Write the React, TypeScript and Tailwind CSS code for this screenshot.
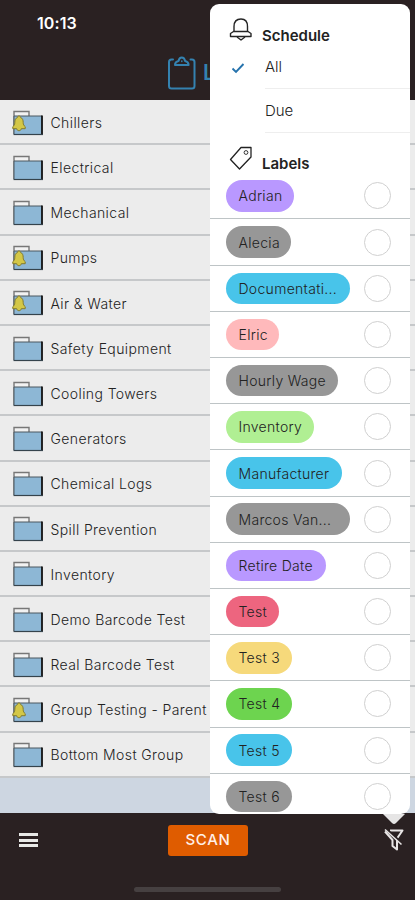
import clsx from "clsx";

const groups = [
  { name: "Chillers", alert: true },
  { name: "Electrical" },
  { name: "Mechanical" },
  { name: "Pumps", alert: true },
  { name: "Air & Water", alert: true },
  { name: "Safety Equipment" },
  { name: "Cooling Towers" },
  { name: "Generators" },
  { name: "Chemical Logs" },
  { name: "Spill Prevention" },
  { name: "Inventory" },
  { name: "Demo Barcode Test" },
  { name: "Real Barcode Test" },
  { name: "Group Testing - Parent", alert: true },
  { name: "Bottom Most Group" },
];

const labels = [
  { name: "Adrian", style: "w-[68px] bg-[#b998ff]" },
  { name: "Alecia", style: "w-[65px] bg-[#979797]" },
  { name: "Documentati...", style: "w-[124px] bg-[#48c4ea]" },
  { name: "Elric", style: "w-[53px] bg-[#ffb9bb]" },
  { name: "Hourly Wage", style: "w-[112px] bg-[#979797]" },
  { name: "Inventory", style: "w-[88px] bg-[#b0ef93]" },
  { name: "Manufacturer", style: "w-[116px] bg-[#48c4ea]" },
  { name: "Marcos Van...", style: "w-[124px] bg-[#979797]" },
  { name: "Retire Date", style: "w-[100px] bg-[#b998ff]" },
  { name: "Test", style: "w-[53px] bg-[#ed657f]" },
  { name: "Test 3", style: "w-[66px] bg-[#f6d97b]" },
  { name: "Test 4", style: "w-[66px] bg-[#6dd44f]" },
  { name: "Test 5", style: "w-[66px] bg-[#48c4ea]" },
  { name: "Test 6", style: "w-[66px] bg-[#979797]" },
];

function FolderIcon({ alert }: { alert?: boolean }) {
  return (
    <svg width="32" height="28" viewBox="0 0 32 28" fill="none" className="mt-0.5 shrink-0">
      <path d="M2 25V2.500H17V7" fill="#f2f2f2" stroke="#777" strokeWidth="1.400" />
      <rect x="2" y="7" width="28" height="18.500" fill="#8db7d5" />
      <path d="M2 25V7H30" stroke="#4d5960" />
      <path d="M30 6.500V26" stroke="#111" strokeWidth="1.800" />
      <path d="M1.500 25.500H31" stroke="#35434c" strokeWidth="1.200" />
      {alert && (
        <path
          d="M7 7c1 0 1.400.6 1.500 1.400C10.500 9.200 11.200 11 11.200 13.500c0 2 .6 3 2 4.200v2H9.300C9 21 8.300 21.700 7 21.700S5 21 4.700 19.700H.8v-2c1.400-1.200 2-2.200 2-4.200C2.800 11 3.500 9.200 5.500 8.400 5.600 7.600 6 7 7 7Z"
          fill="#d3c747"
          stroke="#837b2b"
          strokeWidth="1"
        />
      )}
    </svg>
  );
}

function ClipboardIcon() {
  return (
    <svg width="30" height="36" viewBox="0 0 30 36" fill="none" stroke="#3482b0" strokeWidth="2" strokeLinecap="round" strokeLinejoin="round">
      <path d="M6 5.500H4.500Q2 5.500 2 8V32Q2 34.500 4.500 34.500H25Q27.500 34.500 27.500 32V8Q27.500 5.500 25 5.500H23.500" />
      <path d="M8 11C8 8.500 9 7.500 11.500 7C12 4.500 13 3.500 14.800 3.500S17.600 4.500 18.100 7C20.600 7.500 21.600 8.500 21.600 11Z" />
      <path d="M14.800 7v.5" strokeWidth="1.500" />
    </svg>
  );
}

function BellIcon() {
  return (
    <svg width="24" height="26" viewBox="0 0 24 26" fill="none" stroke="#252525" strokeWidth="1.400" strokeLinejoin="round">
      <path d="M5 14.500V9.500C5 5 7.500 2 12 2S18.500 5 18.500 9.500V14.500" />
      <path d="M4.500 14.500H19L22 16.500V19.500H1.500V16.500Z" />
      <path d="M8 20 12 23 16 20" />
    </svg>
  );
}

function TagIcon() {
  return (
    <svg width="24" height="26" viewBox="0 0 24 26" fill="none" stroke="#222" strokeWidth="1.300" strokeLinejoin="round">
      <path d="M12 2.500H22V12L10.500 24 1.500 14.500Z" />
      <circle cx="17" cy="7.500" r="1.900" strokeWidth="0.900" />
    </svg>
  );
}

function FilterOffIcon() {
  return (
    <svg width="24" height="24" viewBox="0 0 24 24" fill="none" stroke="#e8e5e5" strokeWidth="2" strokeLinejoin="round">
      <path d="M8 2.500H20.500L15 10.500V21.500L10.500 18V12L3 3.500" />
      <path d="M4.500 1 20.500 15.500" stroke="#2a2122" strokeWidth="2" />
      <path d="M3 1.500 19.500 16.500" strokeWidth="1.600" />
    </svg>
  );
}

function FilterPanel() {
  return (
    <div className="absolute left-[210px] top-1 z-10 h-[810px] w-[200px] overflow-hidden rounded-[9px] bg-white">
      <div className="flex h-[41px] pl-[19px] pt-[13px]">
        <BellIcon />
        <h2 className="ml-[9px] mt-[9px] text-[15px] font-semibold leading-5 text-[#222]">Schedule</h2>
      </div>
      <div className="flex h-[44px]">
        <div className="w-[55px] pl-[21px] pt-[16px]">
          <svg width="14" height="14" viewBox="0 0 14 14" fill="none" stroke="#2673ad" strokeWidth="1.900">
            <path d="m1.500 7.500 3.500 3.500L12.500 3" />
          </svg>
        </div>
        <div className="flex-1 border-b border-[#eee] pt-[12px] text-[15px] font-light leading-5">All</div>
      </div>
      <div className="ml-[55px] h-[44px] border-b border-[#eee] pt-[12px] text-[15px] font-light leading-5">Due</div>
      <div className="flex h-[40.300px] pl-[19px] pt-[12px]">
        <TagIcon />
        <h2 className="ml-[9px] mt-[9px] text-[15px] font-semibold leading-5 text-[#222]">Labels</h2>
      </div>
      {labels.map((label) => (
        <div key={label.name} className="flex h-[46.200px] items-center justify-between border-b border-[#bec4c6] pl-4 pr-[19px]">
          <span className={clsx("flex h-[31.500px] items-center whitespace-nowrap rounded-full pl-[12.500px] text-[14px] font-light tracking-[0.3px]", label.style)}>
            {label.name}
          </span>
          <span className="size-[27px] rounded-full border border-[#d0d0d0]" />
        </div>
      ))}
    </div>
  );
}

export default function App() {
  return (
    <div className="relative flex h-[900px] w-[415px] flex-col overflow-hidden bg-[#2a2122] font-['Inter',sans-serif] text-[#222]">
      <header className="h-[100px] shrink-0">
        <div className="h-[54px] pl-[37px] pt-[13px] text-[16px] font-semibold leading-5 tracking-[0.1px] text-white">10:13</div>
        <div className="flex pl-[167px]">
          <ClipboardIcon />
          <span className="ml-[6px] mt-[5px] text-[21px] font-semibold leading-7 text-[#3482b0]">Logs</span>
        </div>
      </header>

      <main className="h-[713px] shrink-0 bg-[#cdd6e1]">
        {groups.map((group) => (
          <div key={group.name} className="flex h-[45.200px] items-center border-b-2 border-[#c6c8ca] bg-[#ececec] pl-3">
            <FolderIcon alert={group.alert} />
            <span className="ml-[6.500px] mt-[1.500px] whitespace-nowrap text-[14px] font-light tracking-[0.4px]">{group.name}</span>
          </div>
        ))}
      </main>

      <footer className="flex flex-1 flex-col">
        <div className="flex h-[54px] items-center pl-[19px]">
          <div className="flex w-[19px] flex-col gap-[2.500px]">
            <span className="h-[3px] bg-[#e8e9e7]" />
            <span className="h-[3px] bg-[#e8e9e7]" />
            <span className="h-[3px] bg-[#e8e9e7]" />
          </div>
          <button className="ml-[130px] h-[31px] w-20 rounded-[3px] bg-[#df5c00] text-[15px] font-medium tracking-[0.7px] text-[#fff0e8]">SCAN</button>
          <div className="ml-[134px]">
            <FilterOffIcon />
          </div>
        </div>
        <div className="mx-auto mt-[20px] h-[5px] w-[147px] rounded-full bg-[#464041]" />
      </footer>

      <FilterPanel />
      <svg width="22" height="11" viewBox="0 0 22 11" className="absolute left-[383px] top-[814px]">
        <path d="M0 0H22L13 9Q11 11 9 9Z" fill="#e6e5e5" />
      </svg>
    </div>
  );
}
